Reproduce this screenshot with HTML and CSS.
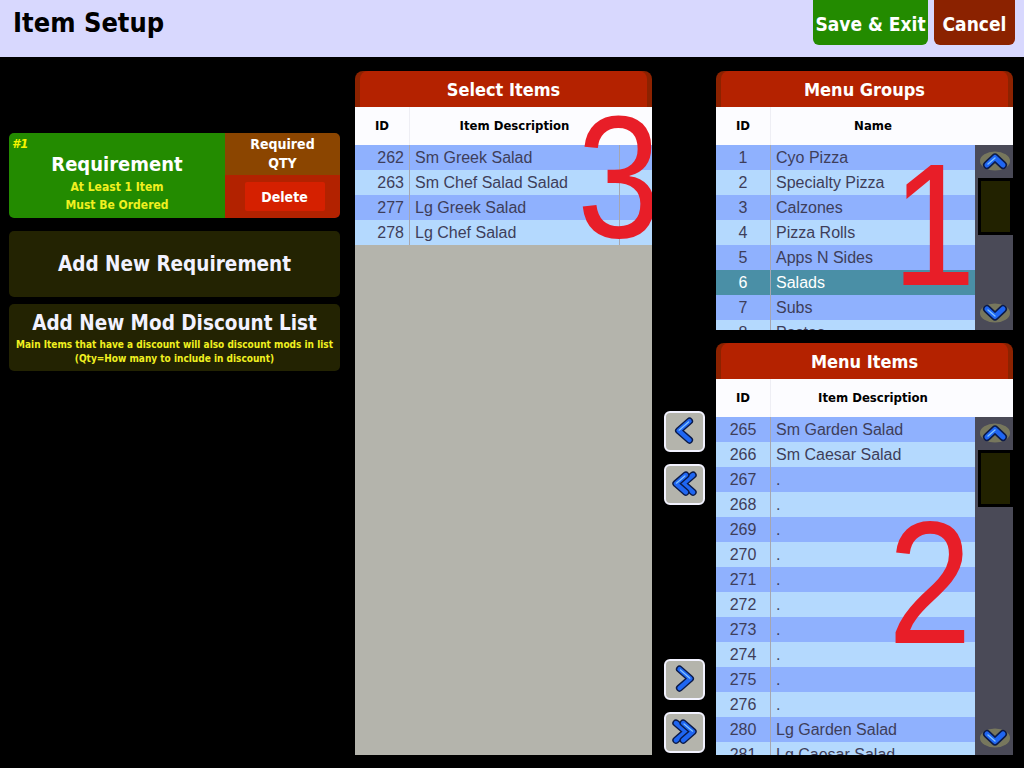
FILE: index.html
```html
<!DOCTYPE html>
<html lang="en">
<head>
  <meta charset="UTF-8">
  <title>Item Setup</title>
  <link rel="stylesheet" href="styles.css">
</head>
<body>
  <header class="topbar">
    <h1 class="page-title">Item Setup</h1>
    <div class="top-actions">
      <button class="top-btn save">Save &amp; Exit</button>
      <button class="top-btn cancel">Cancel</button>
    </div>
  </header>

  <svg class="defs" width="0" height="0">
    <defs>
      <g id="chev-left">
        <polyline class="o" points="26,9 14,19.5 26,30"/>
        <polyline class="b" points="26,9 14,19.5 26,30"/>
        <polyline class="h" points="25,10 14.5,19 "/>
      </g>
      <g id="chev-left2">
        <polyline class="o" points="30,10 19,19.5 30,29"/>
        <polyline class="b" points="30,10 19,19.5 30,29"/>
        <polyline class="o" points="22,10 11,19.5 22,29"/>
        <polyline class="b" points="22,10 11,19.5 22,29"/>
        <polyline class="h" points="21,11 11.5,19"/>
      </g>
      <g id="chev-up">
        <polyline class="o" points="7,14 15,6.5 23,14"/>
        <polyline class="b" points="7,14 15,6.5 23,14"/>
        <polyline class="h" points="8,13 15,7"/>
      </g>
    </defs>
  </svg>

  <main class="workspace">
    <!-- requirement list -->
    <section class="side">
      <div class="req-card">
        <div class="req-main">
          <span class="req-num">#1</span>
          <div class="req-title">Requirement</div>
          <div class="req-note">At Least 1 Item<br>Must Be Ordered</div>
        </div>
        <div class="req-side">
          <div class="req-qty">Required<br>QTY</div>
          <div class="req-del"><button class="del-btn">Delete</button></div>
        </div>
      </div>
      <button class="side-btn add-req">Add New Requirement</button>
      <button class="side-btn add-mod">
        <span class="side-btn-title">Add New Mod Discount List</span>
        <span class="side-btn-note">Main Items that have a discount will also discount mods in list<br>(Qty=How many to include in discount)</span>
      </button>
    </section>

    <!-- items picked for this requirement -->
    <section class="panel select-panel">
      <div class="panel-head"><div class="panel-head-in">Select Items</div></div>
      <div class="col-head cols-select">
        <div>ID</div><div>Item Description</div><div></div>
      </div>
      <div class="panel-body select-body">
        <div class="row cols-select dark"><div class="id">262</div><div class="desc">Sm Greek Salad</div><div class="extra"></div></div>
        <div class="row cols-select light"><div class="id">263</div><div class="desc">Sm Chef Salad Salad</div><div class="extra"></div></div>
        <div class="row cols-select dark"><div class="id">277</div><div class="desc">Lg Greek Salad</div><div class="extra"></div></div>
        <div class="row cols-select light"><div class="id">278</div><div class="desc">Lg Chef Salad</div><div class="extra"></div></div>
      </div>
      <div class="tag tag-3">3</div>
    </section>

    <!-- move buttons -->
    <section class="movers">
      <div class="mover-group">
        <button class="mover"><svg viewBox="0 0 41 41" width="37" height="37"><use href="#chev-left"/></svg></button>
        <button class="mover"><svg viewBox="0 0 41 41" width="37" height="37"><use href="#chev-left2"/></svg></button>
      </div>
      <div class="mover-group bottom">
        <button class="mover"><svg class="flip" viewBox="0 0 41 41" width="37" height="37"><use href="#chev-left"/></svg></button>
        <button class="mover"><svg class="flip" viewBox="0 0 41 41" width="37" height="37"><use href="#chev-left2"/></svg></button>
      </div>
    </section>

    <section class="right">
      <div class="panel groups-panel">
        <div class="panel-head"><div class="panel-head-in">Menu Groups</div></div>
        <div class="col-head cols-list">
          <div>ID</div><div>Name</div><div></div>
        </div>
        <div class="panel-body list-body">
          <div class="rows">
            <div class="row cols-rows dark"><div class="id c">1</div><div class="desc">Cyo Pizza</div></div>
            <div class="row cols-rows light"><div class="id c">2</div><div class="desc">Specialty Pizza</div></div>
            <div class="row cols-rows dark"><div class="id c">3</div><div class="desc">Calzones</div></div>
            <div class="row cols-rows light"><div class="id c">4</div><div class="desc">Pizza Rolls</div></div>
            <div class="row cols-rows dark"><div class="id c">5</div><div class="desc">Apps N Sides</div></div>
            <div class="row cols-rows picked"><div class="id c">6</div><div class="desc">Salads</div></div>
            <div class="row cols-rows dark"><div class="id c">7</div><div class="desc">Subs</div></div>
            <div class="row cols-rows light"><div class="id c">8</div><div class="desc">Pastas</div></div>
          </div>
          <div class="scroll">
            <div class="scroll-btn"><svg viewBox="0 0 30 20" width="30" height="20"><ellipse cx="15" cy="10" rx="15" ry="9.5" fill="#77775d"/><use href="#chev-up"/></svg></div>
            <div class="thumb"></div>
            <div class="scroll-btn down"><svg class="flip-v" viewBox="0 0 30 20" width="30" height="20"><ellipse cx="15" cy="10" rx="15" ry="9.5" fill="#77775d"/><use href="#chev-up"/></svg></div>
          </div>
        </div>
        <div class="tag tag-1">1</div>
      </div>

      <div class="panel items-panel">
        <div class="panel-head"><div class="panel-head-in">Menu Items</div></div>
        <div class="col-head cols-list">
          <div>ID</div><div>Item Description</div><div></div>
        </div>
        <div class="panel-body list-body">
          <div class="rows">
            <div class="row cols-rows dark"><div class="id c">265</div><div class="desc">Sm Garden Salad</div></div>
            <div class="row cols-rows light"><div class="id c">266</div><div class="desc">Sm Caesar Salad</div></div>
            <div class="row cols-rows dark"><div class="id c">267</div><div class="desc">.</div></div>
            <div class="row cols-rows light"><div class="id c">268</div><div class="desc">.</div></div>
            <div class="row cols-rows dark"><div class="id c">269</div><div class="desc">.</div></div>
            <div class="row cols-rows light"><div class="id c">270</div><div class="desc">.</div></div>
            <div class="row cols-rows dark"><div class="id c">271</div><div class="desc">.</div></div>
            <div class="row cols-rows light"><div class="id c">272</div><div class="desc">.</div></div>
            <div class="row cols-rows dark"><div class="id c">273</div><div class="desc">.</div></div>
            <div class="row cols-rows light"><div class="id c">274</div><div class="desc">.</div></div>
            <div class="row cols-rows dark"><div class="id c">275</div><div class="desc">.</div></div>
            <div class="row cols-rows light"><div class="id c">276</div><div class="desc">.</div></div>
            <div class="row cols-rows dark"><div class="id c">280</div><div class="desc">Lg Garden Salad</div></div>
            <div class="row cols-rows light"><div class="id c">281</div><div class="desc">Lg Caesar Salad</div></div>
          </div>
          <div class="scroll">
            <div class="scroll-btn"><svg viewBox="0 0 30 20" width="30" height="20"><ellipse cx="15" cy="10" rx="15" ry="9.5" fill="#77775d"/><use href="#chev-up"/></svg></div>
            <div class="thumb"></div>
            <div class="scroll-btn down"><svg class="flip-v" viewBox="0 0 30 20" width="30" height="20"><ellipse cx="15" cy="10" rx="15" ry="9.5" fill="#77775d"/><use href="#chev-up"/></svg></div>
          </div>
        </div>
        <div class="tag tag-2">2</div>
      </div>
    </section>
  </main>
</body>
</html>
```

FILE: styles.css
```css
* {
  box-sizing: border-box;
}

html, body {
  margin: 0;
  padding: 0;
}

body {
  width: 1024px;
  height: 768px;
  overflow: hidden;
  background-color: #000;
  font-family: "DejaVu Sans Condensed", "DejaVu Sans", sans-serif;
}

button {
  font-family: inherit;
  cursor: pointer;
}

.defs {
  position: absolute;
  width: 0;
  height: 0;
}

/* top bar */

.topbar {
  height: 57px;
  background-color: #d8d8fe;
  display: flex;
  justify-content: space-between;
}

.page-title {
  margin: 0;
  padding: 7px 0 0 13px;
  font-size: 27px;
  font-weight: bold;
  color: #000;
}

.top-actions {
  display: flex;
  gap: 6px;
  padding-right: 9px;
  height: 45px;
}

.top-btn {
  border: none;
  color: #fff;
  font-size: 19px;
  font-weight: bold;
  border-radius: 0 0 6px 6px;
  padding: 2px 0 0;
}

.save {
  width: 115px;
  background-color: #238b00;
}

.cancel {
  width: 81px;
  background-color: #8b2200;
}

/* main area */

.workspace {
  display: grid;
  grid-template-columns: 346px 297px 64px 297px;
  grid-template-rows: minmax(0, 1fr);
  height: 711px;
  padding: 14px 11px 13px 9px;
}

.side {
  padding: 62px 15px 0 0;
  display: flex;
  flex-direction: column;
}

.req-card {
  display: flex;
  height: 85px;
  border-radius: 5px;
  overflow: hidden;
}

.req-main {
  position: relative;
  width: 216px;
  background-color: #238b00;
  text-align: center;
  padding-top: 19px;
}

.req-num {
  position: absolute;
  top: 3px;
  left: 3px;
  color: #f4f400;
  font-size: 13px;
  font-weight: bold;
  font-style: italic;
}

.req-title {
  color: #fff;
  font-size: 20px;
  font-weight: bold;
  line-height: 24px;
}

.req-note {
  color: #f0f020;
  font-size: 12px;
  font-weight: bold;
  line-height: 18px;
  margin-top: 2px;
}

.req-side {
  flex: 1;
  display: flex;
  flex-direction: column;
}

.req-qty {
  height: 42px;
  background-color: #8b4500;
  color: #fff;
  font-size: 14px;
  font-weight: bold;
  text-align: center;
  line-height: 19px;
  padding-top: 2px;
}

.req-del {
  flex: 1;
  background-color: #b22200;
  display: flex;
  justify-content: center;
  align-items: flex-start;
  padding: 7px 0 0 4px;
}

.del-btn {
  width: 80px;
  height: 29px;
  border: none;
  border-radius: 2px;
  background-color: #d52000;
  color: #fff;
  font-size: 14px;
  font-weight: bold;
}

.side-btn {
  border: none;
  border-radius: 5px;
  background-color: #232302;
  color: #f2f2ff;
  font-weight: bold;
  text-align: center;
}

.add-req {
  margin-top: 13px;
  height: 66px;
  font-size: 20.5px;
}

.add-mod {
  margin-top: 7px;
  height: 67px;
  display: flex;
  flex-direction: column;
  align-items: center;
  padding: 7px 0 0;
}

.side-btn-title {
  font-size: 20.5px;
  line-height: 24px;
}

.side-btn-note {
  margin-top: 3px;
  color: #f0f020;
  font-size: 10px;
  line-height: 14px;
  white-space: nowrap;
}

/* list panels */

.panel {
  position: relative;
  display: flex;
  flex-direction: column;
  overflow: hidden;
  min-height: 0;
}

.panel-head {
  height: 36px;
  flex: none;
  background-color: #8c2200;
  border-radius: 8px 8px 0 0;
  padding: 0 5px;
}

.panel-head-in {
  height: 100%;
  background-color: #b42200;
  border-radius: 8px 8px 0 0;
  color: #fff;
  font-size: 18px;
  font-weight: bold;
  text-align: center;
  line-height: 37px;
}

.col-head {
  height: 38px;
  flex: none;
  background-color: #fcfcff;
  color: #000;
  font-size: 13px;
  font-weight: bold;
  text-align: center;
  line-height: 38px;
}

.col-head > div:first-child {
  border-right: 1px solid #eeeef4;
}

.cols-select {
  display: grid;
  grid-template-columns: 55px 209px 33px;
}

.cols-list {
  display: grid;
  grid-template-columns: 55px 204px 38px;
}

.cols-rows {
  display: grid;
  grid-template-columns: 55px 204px;
}

.panel-body {
  flex: 1;
  min-height: 0;
}

.select-body {
  background-color: #b4b4ac;
}

.list-body {
  display: grid;
  grid-template-columns: 259px 38px;
  grid-template-rows: minmax(0, 1fr);
}

.rows {
  overflow: hidden;
}

.row {
  height: 25px;
  font-family: "Liberation Sans", Arial, sans-serif;
  font-size: 16px;
  line-height: 25px;
  color: #3e3e5a;
}

.row.dark {
  background-color: #8fb1fe;
}

.row.light {
  background-color: #b4d9fe;
}

.row.picked {
  background-color: #4a8fa6;
  color: #fff;
}

.row .id {
  border-right: 1px solid #a6a6b0;
  text-align: right;
  padding-right: 5px;
}

.row .id.c {
  text-align: center;
  padding-right: 0;
}

.row .desc {
  padding-left: 5px;
  white-space: nowrap;
  overflow: hidden;
}

.row .extra {
  border-left: 1px solid #a6a6b0;
}

/* scrollbar */

.scroll {
  background-color: #4a4a57;
  display: flex;
  flex-direction: column;
  align-items: center;
  padding: 6px 0 7px;
}

.scroll-btn {
  height: 20px;
  padding-left: 1px;
}

.scroll-btn svg {
  display: block;
}

.scroll-btn.down {
  margin-top: auto;
}

.thumb {
  width: 35px;
  height: 57px;
  margin-top: 7px;
  margin-left: 3px;
  background-color: #222200;
  border: 3px solid #000;
}

/* chevron strokes: dark rim, blue body, light edge */

.o, .b, .h {
  fill: none;
  stroke-linecap: round;
  stroke-linejoin: round;
}

.o {
  stroke: #0b1a48;
  stroke-width: 8;
}

.b {
  stroke: #1f66f2;
  stroke-width: 5;
}

.h {
  stroke: #80c2ff;
  stroke-width: 1.4;
}

.flip {
  transform: scaleX(-1);
}

.flip-v {
  transform: scaleY(-1);
}

/* movers */

.movers {
  display: flex;
  flex-direction: column;
  align-items: center;
  padding: 340px 0 2px 0;
}

.mover-group {
  display: flex;
  flex-direction: column;
  gap: 12px;
}

.mover-group.bottom {
  margin-top: auto;
}

.mover {
  width: 41px;
  height: 41px;
  padding: 0;
  border: 2px solid #f2f2ff;
  border-radius: 6px;
  background-color: #b4b4ac;
  display: flex;
  align-items: center;
  justify-content: center;
}

.mover svg,
.scroll-btn svg {
  overflow: visible;
}

.right {
  display: flex;
  flex-direction: column;
  gap: 13px;
  min-height: 0;
}

.groups-panel {
  height: 259px;
  flex: none;
}

.items-panel {
  flex: 1;
}

/* big red annotation numerals */

.tag {
  position: absolute;
  font-family: "Liberation Sans", Arial, sans-serif;
  font-size: 175px;
  line-height: 1;
  color: #e81e28;
  pointer-events: none;
  transform-origin: left top;
  transform: scaleX(0.86);
}

.tag-3 {
  top: 18px;
  left: 222px;
}

.tag-1 {
  top: 66px;
  left: 176px;
}

.tag-2 {
  top: 152px;
  left: 172px;
}
```
